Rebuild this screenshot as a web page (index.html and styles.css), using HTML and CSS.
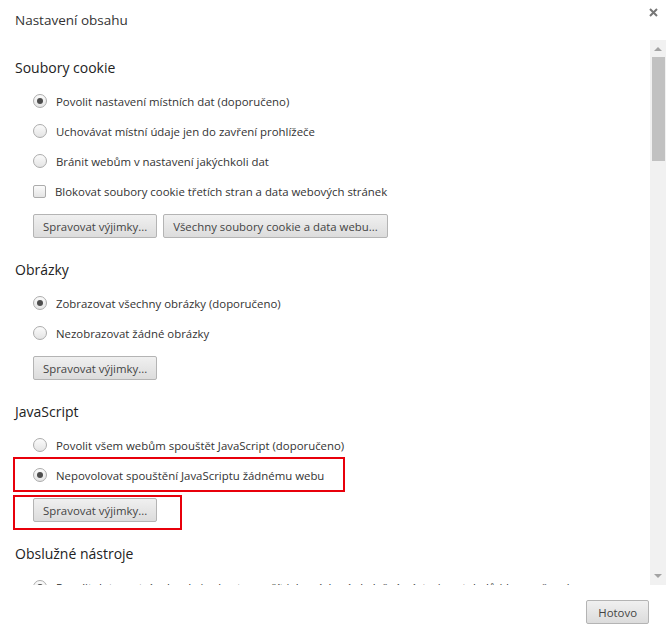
FILE: index.html
```html
<!DOCTYPE html>
<html lang="cs">
<head>
  <meta charset="UTF-8" />
  <title>Nastavení obsahu</title>
  <link rel="stylesheet" href="styles.css">
</head>
<body>
  <div class="dialog">
    <div class="dialog-head">
      <h1 class="title">Nastavení obsahu</h1>
      <button class="close" aria-label="Zavřít">
        <svg width="9" height="9" viewBox="0 0 9 9"><path d="M1 1 L8 8 M8 1 L1 8" stroke="#777" stroke-width="2" fill="none"/></svg>
      </button>
    </div>

    <div class="dialog-body">
      <div class="scroll-content">
        <section class="group">
          <h2 class="group-title">Soubory cookie</h2>
          <div class="options">
            <label class="option"><span class="radio checked"></span>Povolit nastavení místních dat (doporučeno)</label>
            <label class="option"><span class="radio"></span>Uchovávat místní údaje jen do zavření prohlížeče</label>
            <label class="option"><span class="radio"></span>Bránit webům v nastavení jakýchkoli dat</label>
            <label class="option"><span class="check"></span>Blokovat soubory cookie třetích stran a data webových stránek</label>
          </div>
          <div class="actions">
            <button class="btn">Spravovat výjimky...</button>
            <button class="btn">Všechny soubory cookie a data webu...</button>
          </div>
        </section>

        <section class="group">
          <h2 class="group-title">Obrázky</h2>
          <div class="options">
            <label class="option"><span class="radio checked"></span>Zobrazovat všechny obrázky (doporučeno)</label>
            <label class="option"><span class="radio"></span>Nezobrazovat žádné obrázky</label>
          </div>
          <div class="actions">
            <button class="btn">Spravovat výjimky...</button>
          </div>
        </section>

        <section class="group">
          <h2 class="group-title">JavaScript</h2>
          <div class="options">
            <label class="option"><span class="radio"></span>Povolit všem webům spouštět JavaScript (doporučeno)</label>
            <label class="option marked"><span class="radio checked"></span>Nepovolovat spouštění JavaScriptu žádnému webu<span class="highlight wide"></span></label>
          </div>
          <div class="actions marked">
            <button class="btn">Spravovat výjimky...</button>
            <span class="highlight narrow"></span>
          </div>
        </section>

        <section class="group">
          <h2 class="group-title">Obslužné nástroje</h2>
          <div class="options">
            <label class="option"><span class="radio checked"></span>Povolit dotazy stránek, zda je chcete použít jako výchozí obslužný nástroj protokolů (doporučeno)</label>
          </div>
        </section>
      </div>

      <div class="scrollbar">
        <span class="arrow up"></span>
        <div class="thumb"></div>
        <span class="arrow down"></span>
      </div>
    </div>

    <div class="dialog-foot">
      <button class="btn done">Hotovo</button>
    </div>
  </div>
</body>
</html>
```

FILE: styles.css
```css
body {
  margin: 0;
  font-family: 'Open Sans', 'Noto Sans', sans-serif;
  font-size: 11.4px;
  color: #333;
  background: #fff;
}
.dialog {
  width: 666px;
  height: 635px;
  display: flex;
  flex-direction: column;
}
.dialog-head {
  position: relative;
  height: 40px;
  flex: none;
}
.title {
  margin: 0;
  padding-left: 15px;
  font-size: 13.5px;
  font-weight: 400;
  line-height: 40px;
  color: #333;
}
.close {
  position: absolute;
  top: 8px;
  right: 8px;
  width: 9px;
  height: 9px;
  padding: 0;
  border: none;
  background: none;
  display: flex;
}
.dialog-body {
  height: 545px;
  flex: none;
  display: flex;
}
.scroll-content {
  flex: 1;
  overflow: hidden;
  padding: 17px 0 0 15px;
}
.group + .group { margin-top: 21px; }
.group-title {
  margin: 0;
  font-size: 14px;
  font-weight: 400;
  line-height: 22px;
  color: #222;
}
.options {
  margin: 7px 0 0 18px;
}
.option {
  height: 30px;
  display: flex;
  align-items: center;
  gap: 9px;
  white-space: nowrap;
  color: #333;
}
.radio, .check {
  width: 14px;
  height: 14px;
  box-sizing: border-box;
  border: 1px solid #acacac;
  background: linear-gradient(#fbfbfb, #e4e4e4);
  flex: none;
  position: relative;
}
.radio { border-radius: 50%; }
.check {
  width: 13px;
  height: 13px;
  border-radius: 2px;
}
.radio.checked::after {
  content: "";
  position: absolute;
  left: 3px;
  top: 3px;
  width: 6px;
  height: 6px;
  border-radius: 50%;
  background: #4d4d4d;
}
.actions {
  margin: 8px 0 0 18px;
  display: flex;
  gap: 6px;
}
.btn {
  height: 24px;
  padding: 0 9px;
  border: 1px solid #b4b4b4;
  border-radius: 2px;
  background: linear-gradient(#f0f0f0, #dcdcdc);
  font-family: inherit;
  font-size: 11.4px;
  color: #444;
}
.marked { position: relative; }
.highlight {
  position: absolute;
  border: 2px solid #e8000b;
  box-sizing: border-box;
}
.highlight.wide {
  left: -20px;
  top: -3px;
  width: 332px;
  height: 35px;
}
.highlight.narrow {
  left: -20px;
  top: -3px;
  width: 169px;
  height: 35px;
}
.scrollbar {
  width: 16px;
  flex: none;
  background: #f1f1f1;
  display: flex;
  flex-direction: column;
}
.arrow {
  height: 17px;
  flex: none;
  position: relative;
}
.arrow::after {
  content: "";
  position: absolute;
  left: 4px;
  border-left: 4px solid transparent;
  border-right: 4px solid transparent;
}
.arrow.up::after {
  top: 7px;
  border-bottom: 4px solid #a3a3a3;
}
.arrow.down { margin-top: auto; }
.arrow.down::after {
  top: 6px;
  border-top: 4px solid #a3a3a3;
}
.thumb {
  height: 104px;
  margin: 0 1px 0 2px;
  background: #c1c1c1;
}
.dialog-foot {
  flex: 1;
  display: flex;
  justify-content: flex-end;
  align-items: flex-start;
  padding: 15px 17px 0 0;
}
.btn.done { padding: 0 11px; }
```
